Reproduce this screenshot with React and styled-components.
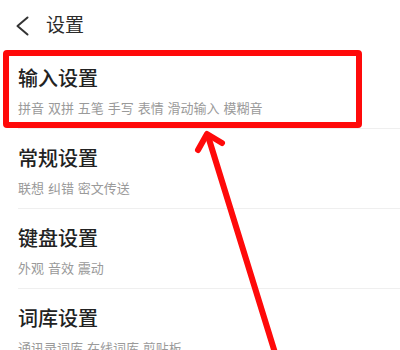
import React from "react";
import styled, { createGlobalStyle } from "styled-components";

const GlobalStyle = createGlobalStyle`
  html, body {
    margin: 0;
    padding: 0;
    background: #ffffff;
  }
  body {
    font-family: "Noto Sans CJK SC", "Noto Sans", sans-serif;
  }
`;

const Page = styled.div`
  position: relative;
  width: 400px;
  height: 350px;
  overflow: hidden;
  background: #ffffff;
`;

const Header = styled.div`
  height: 49px;
  display: flex;
  align-items: center;
  padding-left: 15px;
  box-sizing: border-box;
`;

const BackButton = styled.div`
  width: 14px;
  height: 20px;
  display: flex;
  align-items: center;
  margin-top: 3px;
`;

const HeaderTitle = styled.span`
  margin-left: 17px;
  font-size: 19px;
  color: #2b2b2b;
  line-height: 1;
  margin-top: -2px;
`;

const List = styled.div`
  display: flex;
  flex-direction: column;
`;

const Row = styled.div`
  margin-left: 18px;
  height: 80px;
  box-sizing: border-box;
  padding-top: 17px;
  border-bottom: 1px solid #efefef;
`;

const Title = styled.div`
  font-size: 20px;
  line-height: 24px;
  font-weight: 500;
  color: #222222;
`;

const Subtitle = styled.div`
  margin-top: 9px;
  font-size: 13px;
  line-height: 18px;
  color: #9a9a9a;
  word-spacing: 1px;
`;

const Highlight = styled.div`
  position: absolute;
  left: 3px;
  top: 50px;
  width: 359px;
  height: 78px;
  box-sizing: border-box;
  border: 6px solid #ff0a0a;
  border-radius: 4px;
  pointer-events: none;
`;

const Arrow = styled.svg`
  position: absolute;
  left: 0;
  top: 0;
  pointer-events: none;
`;

const items = [
  { title: "输入设置", sub: "拼音 双拼 五笔 手写 表情 滑动输入 模糊音" },
  { title: "常规设置", sub: "联想 纠错 密文传送" },
  { title: "键盘设置", sub: "外观 音效 震动" },
  { title: "词库设置", sub: "通讯录词库 在线词库 剪贴板" },
];

export default function App() {
  return (
    <>
      <GlobalStyle />
      <Page>
        <Header>
          <BackButton>
            <svg width="14" height="20" viewBox="0 0 14 20">
              <path d="M12.5 1.5 L2.5 10 L12.5 18.5" fill="none" stroke="#333" strokeWidth="2" strokeLinecap="round" strokeLinejoin="round" />
            </svg>
          </BackButton>
          <HeaderTitle>设置</HeaderTitle>
        </Header>
        <List>
          {items.map((it) => (
            <Row key={it.title}>
              <Title>{it.title}</Title>
              <Subtitle>{it.sub}</Subtitle>
            </Row>
          ))}
        </List>
        <Highlight />
        <Arrow width="400" height="350" viewBox="0 0 400 350">
          <g stroke="#ff0a0a" strokeWidth="6" strokeLinecap="round" strokeLinejoin="round" fill="none">
            <line x1="208" y1="136" x2="276" y2="356" />
            <polyline points="198,150 207,134 222,143" />
          </g>
        </Arrow>
      </Page>
    </>
  );
}
